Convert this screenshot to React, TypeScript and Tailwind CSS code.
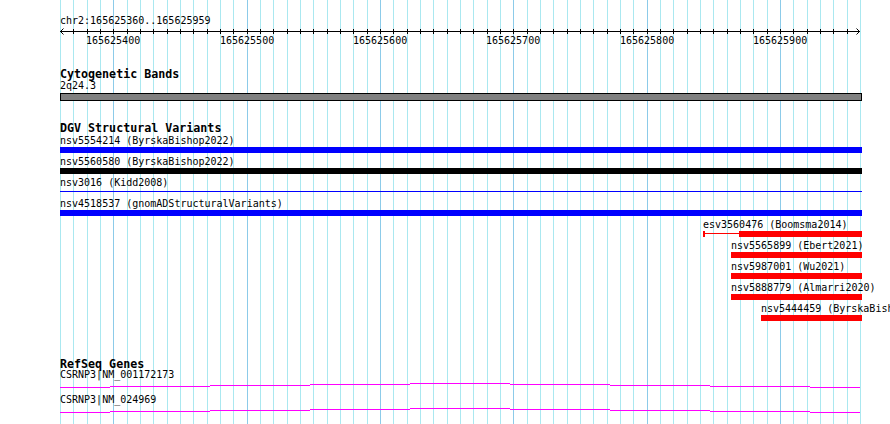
import React from 'react';

// canvas geometry: data area starts at x=60 and spans 800px for 600bp
const X0 = 60;
const gridXs = Array.from({ length: 61 }, (_, k) => X0 + Math.round((k * 40) / 3));
const majorKs = [4, 14, 24, 34, 44, 54];
const tickLabels = [
  { x: 113, text: '165625400' },
  { x: 247, text: '165625500' },
  { x: 380, text: '165625600' },
  { x: 513, text: '165625700' },
  { x: 647, text: '165625800' },
  { x: 780, text: '165625900' },
];

type Variant = {
  label: string;
  x: number;
  end: number;
  color: string;
  kind: 'bar' | 'line' | 'split';
  thick?: number;
};

const variants: Variant[] = [
  { label: 'nsv5554214 (ByrskaBishop2022)', x: 60, end: 862, color: '#0000ff', kind: 'bar' },
  { label: 'nsv5560580 (ByrskaBishop2022)', x: 60, end: 862, color: '#000000', kind: 'bar' },
  { label: 'nsv3016 (Kidd2008)', x: 60, end: 862, color: '#0000ff', kind: 'line' },
  { label: 'nsv4518537 (gnomADStructuralVariants)', x: 60, end: 862, color: '#0000ff', kind: 'bar' },
  { label: 'esv3560476 (Boomsma2014)', x: 703, thick: 739, end: 862, color: '#ff0000', kind: 'split' },
  { label: 'nsv5565899 (Ebert2021)', x: 731, end: 862, color: '#ff0000', kind: 'bar' },
  { label: 'nsv5987001 (Wu2021)', x: 731, end: 862, color: '#ff0000', kind: 'bar' },
  { label: 'nsv5888779 (Almarri2020)', x: 731, end: 862, color: '#ff0000', kind: 'bar' },
  { label: 'nsv5444459 (ByrskaBishop2022)', x: 761, end: 862, color: '#ff0000', kind: 'bar' },
];

// transcript drawn as a shallow staircase, [x from, x to, y] in svg coords
const steps: [number, number, number][] = [
  [0, 50, 7],
  [50, 150, 6],
  [150, 250, 5],
  [250, 350, 4],
  [350, 450, 3],
  [450, 550, 4],
  [550, 650, 5],
  [650, 750, 6],
  [750, 800, 7],
];

const genes = ['CSRNP3|NM_001172173', 'CSRNP3|NM_024969'];

function Grid() {
  return (
    <svg className="absolute inset-0" width={890} height={424}>
      {gridXs.map((x, k) => (
        <rect
          key={k}
          x={x}
          y={0}
          width={1}
          height={424}
          fill={majorKs.includes(k) ? '#8ccbe9' : '#aae8f0'}
        />
      ))}
    </svg>
  );
}

function Ruler() {
  return (
    <div className="flex flex-col">
      <div className="mt-[16px] h-[10px] text-[10px] leading-[10px]">chr2:165625360..165625959</div>
      <svg width={802} height={10} className="block">
        <rect x={0} y={5} width={800} height={1} fill="#000" />
        {gridXs.slice(1, 60).map((x, i) => (
          <rect key={i} x={x - X0} y={3} width={1} height={5} fill="#000" />
        ))}
        <polyline points="3.5,2.5 0.5,5.5 3.5,8.5" stroke="#000" fill="none" />
        <polyline points="796.5,2.5 799.5,5.5 796.5,8.5" stroke="#000" fill="none" />
      </svg>
      <div className="relative h-[10px] text-[10px] leading-[10px]">
        {tickLabels.map((t) => (
          <span key={t.text} className="absolute top-0" style={{ left: t.x - X0 - 27 }}>
            {t.text}
          </span>
        ))}
      </div>
    </div>
  );
}

function VariantRow({ v }: { v: Variant }) {
  const width = v.end - v.x;
  return (
    <div className="flex h-[21px] flex-col" style={{ marginLeft: v.x - X0 }}>
      <div className="h-[10px] whitespace-nowrap text-[10px] leading-[10px]">{v.label}</div>
      <div className="mt-[1px] flex h-[6px]" style={{ width }}>
        {v.kind === 'bar' && <div className="h-full w-full" style={{ backgroundColor: v.color }} />}
        {v.kind === 'line' && (
          <div className="w-full pt-[2px]">
            <div className="h-px w-full" style={{ backgroundColor: v.color }} />
          </div>
        )}
        {v.kind === 'split' && v.thick && (
          <>
            <div className="h-full w-[2px]" style={{ backgroundColor: v.color }} />
            <div className="pt-[2px]" style={{ width: v.thick - v.x - 2 }}>
              <div className="h-px w-full" style={{ backgroundColor: v.color }} />
            </div>
            <div className="h-full flex-1" style={{ backgroundColor: v.color }} />
          </>
        )}
      </div>
    </div>
  );
}

function GeneRow({ name }: { name: string }) {
  return (
    <div className="flex h-[25px] flex-col">
      <div className="h-[10px] whitespace-nowrap text-[10px] leading-[10px]">{name}</div>
      <svg width={800} height={10} className="block">
        {steps.map(([a, b, y]) => (
          <rect key={a} x={a} y={y} width={b - a} height={1} fill="#ff00ff" />
        ))}
      </svg>
    </div>
  );
}

export default function App() {
  return (
    <div className="relative h-[424px] w-[890px] overflow-hidden bg-white font-['DejaVu_Sans_Mono','Liberation_Mono',monospace] text-black">
      <Grid />
      <div className="relative flex flex-col pl-[60px]">
        <Ruler />

        <div className="mt-[22px] h-[12px] text-[11.67px] font-bold leading-[12px]">Cytogenetic Bands</div>
        <div className="mt-[1px] h-[10px] text-[10px] leading-[10px]">2q24.3</div>
        <div className="mt-[2px] h-[8px] w-[802px] border border-black bg-[#808080]" />

        <div className="mt-[21px] h-[12px] text-[11.67px] font-bold leading-[12px]">DGV Structural Variants</div>
        <div className="mt-[2px] flex flex-col">
          {variants.map((v) => (
            <VariantRow key={v.label} v={v} />
          ))}
        </div>

        <div className="mt-[33px] h-[12px] text-[11.67px] font-bold leading-[12px]">RefSeq Genes</div>
        <div className="flex flex-col">
          {genes.map((g) => (
            <GeneRow key={g} name={g} />
          ))}
        </div>
      </div>
    </div>
  );
}
